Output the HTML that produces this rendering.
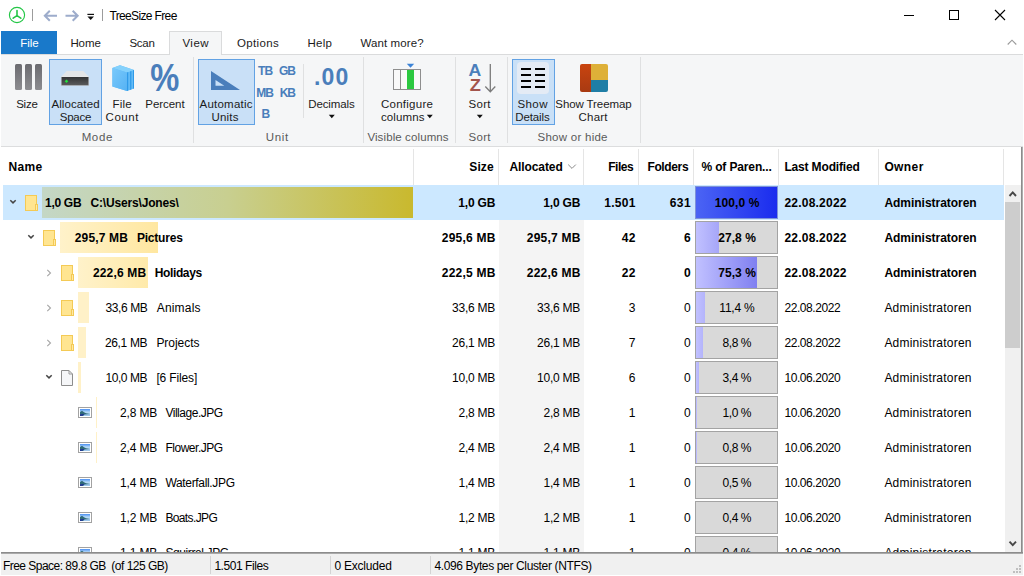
<!DOCTYPE html>
<html lang="en"><head><meta charset="utf-8"><title>TreeSize Free</title>
<style>
html,body{margin:0;padding:0;background:#fff;}
#win{position:relative;width:1024px;height:576px;overflow:hidden;background:#fff;font-family:"Liberation Sans", sans-serif;font-size:12px;color:#000;}
#win div,#win svg{position:absolute;box-sizing:border-box;}
.t{position:absolute;white-space:pre;line-height:16px;height:16px;}
.rb{color:#1b1b1b;}
.gl{color:#5a5a5a;}
.w{color:#fff;}
.bl{color:#4a7ebb;}

</style></head><body>
<div id="win">
<svg style="left:8px;top:6px" width="18" height="18" viewBox="0 0 18 18"><circle cx="9" cy="9" r="7.6" fill="#fff" stroke="#23c646" stroke-width="1.15"/><path d="M9 4.6 L9 9.6 M9 9.6 L5.2 12.2 M9 9.6 L12.8 12.2" stroke="#23c646" stroke-width="1.6" stroke-linecap="round" fill="none"/></svg>
<div style="left:32px;top:9px;width:1px;height:12px;background:#9c9c9c;"></div>
<svg style="left:43px;top:9px" width="16" height="14" viewBox="0 0 16 14"><path d="M14 6.8 H2.2 M6.8 1.8 L1.8 6.8 L6.8 11.8" stroke="#9daccb" stroke-width="2" fill="none"/></svg>
<svg style="left:64px;top:9px" width="16" height="14" viewBox="0 0 16 14"><path d="M1.5 6.8 H13.3 M8.7 1.8 L13.7 6.8 L8.7 11.8" stroke="#9daccb" stroke-width="2" fill="none"/></svg>
<svg style="left:86px;top:12px" width="10" height="10" viewBox="0 0 10 10"><rect x="1.4" y="1.8" width="6.6" height="1.2" fill="#111"/><path d="M1.4 4.6 H8 L4.7 8 Z" fill="#111"/></svg>
<div style="left:102px;top:9px;width:1px;height:12px;background:#9c9c9c;"></div>
<span class="t" style="top:8.24px;left:109.4px;letter-spacing:-0.638px;">TreeSize Free</span>
<div style="left:904px;top:15px;width:10px;height:1px;background:#000;"></div>
<div style="left:949px;top:10px;width:10px;height:10px;background:transparent;border:1px solid #000;"></div>
<svg style="left:994px;top:9px" width="12" height="12" viewBox="0 0 12 12"><path d="M1 1 L11 11 M11 1 L1 11" stroke="#000" stroke-width="1.1" fill="none"/></svg>
<svg style="left:1006px;top:38px" width="12" height="8" viewBox="0 0 12 8"><path d="M1.7 6.5 L6 2.2 L10.3 6.5" stroke="#9a9a9a" stroke-width="1.1" fill="none"/></svg>
<div style="left:1px;top:54px;width:1022px;height:1px;background:#dadbdc;"></div>
<div style="left:1px;top:55px;width:1022px;height:91px;background:#f5f6f7;"></div>
<div style="left:1px;top:146px;width:1022px;height:1px;background:#dcddde;"></div>
<div style="left:1px;top:31px;width:56px;height:23px;background:#1979ca;"></div>
<span class="t w" style="top:35.02px;left:20.32px;letter-spacing:-0.058px;font-size:11.5px;">File</span>
<span class="t rb" style="top:35.02px;left:70.4px;letter-spacing:-0.097px;font-size:11.5px;">Home</span>
<span class="t rb" style="top:35.02px;left:129.4px;letter-spacing:-0.230px;font-size:11.5px;">Scan</span>
<div style="left:169px;top:31px;width:53px;height:24px;background:#f5f6f7;border:1px solid #dadbdc;border-bottom:none;"></div>
<span class="t rb" style="top:35.02px;left:182.4px;letter-spacing:0.520px;font-size:11.5px;">View</span>
<span class="t rb" style="top:35.02px;left:236.9px;letter-spacing:0.380px;font-size:11.5px;">Options</span>
<span class="t rb" style="top:35.02px;left:307.4px;letter-spacing:0.311px;font-size:11.5px;">Help</span>
<span class="t rb" style="top:35.02px;left:360.4px;letter-spacing:0.108px;font-size:11.5px;">Want more?</span>
<div style="left:193px;top:57px;width:1px;height:86px;background:#dfe0e1;"></div>
<div style="left:363px;top:57px;width:1px;height:86px;background:#dfe0e1;"></div>
<div style="left:455px;top:57px;width:1px;height:86px;background:#dfe0e1;"></div>
<div style="left:507px;top:57px;width:1px;height:86px;background:#dfe0e1;"></div>
<div style="left:640px;top:57px;width:1px;height:86px;background:#dfe0e1;"></div>
<div style="left:303px;top:64px;width:1px;height:54px;background:#dfe0e1;"></div>
<div style="left:15px;top:64px;width:7px;height:26px;background:linear-gradient(#6b6b70,#8c8c90);border-radius:1.5px;"></div>
<div style="left:25px;top:64px;width:7px;height:26px;background:linear-gradient(#6b6b70,#8c8c90);border-radius:1.5px;"></div>
<div style="left:35px;top:64px;width:7px;height:26px;background:linear-gradient(#6b6b70,#8c8c90);border-radius:1.5px;"></div>
<span class="t rb" style="top:95.82px;left:16.22px;letter-spacing:-0.269px;font-size:11.5px;">Size</span>
<div style="left:49px;top:59px;width:53px;height:66px;background:#c9e0f7;border:1px solid #62a2e4;"></div>
<svg style="left:60px;top:70px" width="30" height="17" viewBox="0 0 30 17"><defs><linearGradient id="dv" x1="0" y1="0" x2="0" y2="1"><stop offset="0" stop-color="#333435"/><stop offset="1" stop-color="#5a5b5c"/></linearGradient></defs><path d="M6.7 1 H23.3 L28.8 6.8 H1.2 Z" fill="#e3e5e7"/><path d="M2 6 L1.2 6.9 H28.8 L28 6 Z" fill="#f7f8f9"/><rect x="1.2" y="6.8" width="27.6" height="8.9" fill="#a9a9a9"/><rect x="1.7" y="7" width="26.6" height="8.1" fill="url(#dv)"/><path d="M6.5 9.5 L8.3 11.3 L6.5 13.1 L4.7 11.3 Z" fill="#22e23c"/></svg>
<span class="t rb" style="top:95.82px;left:51.40px;letter-spacing:0.110px;font-size:11.5px;">Allocated</span>
<span class="t rb" style="top:108.92px;left:59.72px;letter-spacing:-0.262px;font-size:11.5px;">Space</span>
<svg style="left:111px;top:64px" width="24" height="28" viewBox="0 0 24 28"><defs><linearGradient id="fc" x1="0" y1="0" x2="1" y2="1"><stop offset="0" stop-color="#79c9fb"/><stop offset="1" stop-color="#55b2f4"/></linearGradient></defs><path d="M1.4 4.1 L9 1.3 L23 6 V24.5 L16.1 27 L1.4 22.6 Z" fill="#62bbf7"/><path d="M1.4 4.1 L9 1.3 L23 6 L16.1 8.5 Z" fill="#84d1fc"/><path d="M1.4 4.1 L16.1 8.5 V27 L1.4 22.6 Z" fill="url(#fc)"/><path d="M16.1 8.5 L17.2 8.1 V26.6 L16.1 27 Z M19.2 7.4 L20.3 7 V25.5 L19.2 25.9 Z M22.1 6.3 L23 6 V24.5 L22.1 24.8 Z" fill="#2a97e6"/></svg>
<span class="t rb" style="top:95.82px;left:112.45px;letter-spacing:0.192px;font-size:11.5px;">File</span>
<span class="t rb" style="top:108.92px;left:105.61px;letter-spacing:0.522px;font-size:11.5px;">Count</span>
<span class="t bl" style="top:58.33px;line-height:40px;height:40px;left:148.40px;font-size:38px;font-weight:700;transform:scaleX(.86);">%</span>
<span class="t rb" style="top:95.82px;left:145.33px;letter-spacing:-0.049px;font-size:11.5px;">Percent</span>
<div style="left:198px;top:59px;width:57px;height:66px;background:#c9e0f7;border:1px solid #62a2e4;"></div>
<svg style="left:210px;top:70px" width="31" height="21" viewBox="0 0 31 21"><path d="M1 1 L30 20 H1 Z M5.5 10 V15.8 H14.3 Z" fill="#4a7ebb" fill-rule="evenodd"/></svg>
<span class="t rb" style="top:95.82px;left:199.47px;letter-spacing:0.240px;font-size:11.5px;">Automatic</span>
<span class="t rb" style="top:108.92px;left:211.46px;letter-spacing:0.219px;font-size:11.5px;">Units</span>
<span class="t bl" style="top:62.54px;left:258px;letter-spacing:-0.850px;font-weight:700;">TB</span>
<span class="t bl" style="top:62.54px;left:279.1px;letter-spacing:-1.200px;font-weight:700;">GB</span>
<span class="t bl" style="top:84.54px;left:256.2px;letter-spacing:-0.886px;font-weight:700;">MB</span>
<span class="t bl" style="top:84.54px;left:279.7px;letter-spacing:-1.200px;font-weight:700;">KB</span>
<span class="t bl" style="top:106.44px;left:261.4px;font-weight:700;">B</span>
<span class="t bl" style="top:62.03px;line-height:30px;height:30px;left:314.01px;letter-spacing:1.200px;font-size:23px;font-weight:700;">.00</span>
<span class="t rb" style="top:95.82px;left:308.29px;letter-spacing:-0.125px;font-size:11.5px;">Decimals</span>
<svg style="left:328px;top:114px" width="8" height="5" viewBox="0 0 8 5"><path d="M0.8 0.8 H6.8 L3.8 4.2 Z" fill="#111"/></svg>
<div style="left:393px;top:69px;width:28px;height:21px;background:#f9f9f9;border:1px solid #8e8e8e;"></div>
<div style="left:400px;top:70px;width:1px;height:19px;background:#8e8e8e;"></div>
<div style="left:407px;top:70px;width:7px;height:19px;background:#2cc840;"></div>
<svg style="left:406px;top:63px" width="9" height="6" viewBox="0 0 9 6"><path d="M0.8 0.8 H8.2 L4.5 4.8 Z" fill="#3b82d6"/></svg>
<span class="t rb" style="top:95.82px;left:380.9px;letter-spacing:0.269px;font-size:11.5px;">Configure</span>
<span class="t rb" style="top:108.92px;left:380.9px;letter-spacing:0.139px;font-size:11.5px;">columns</span>
<svg style="left:426px;top:114px" width="8" height="5" viewBox="0 0 8 5"><path d="M0.8 0.8 H6.8 L3.8 4.2 Z" fill="#111"/></svg>
<span class="t bl" style="top:60.48px;line-height:20px;height:20px;left:469.24px;font-size:16.5px;font-weight:700;transform:scaleX(1.07);">A</span>
<span class="t" style="top:76.01px;line-height:20px;height:20px;left:470.40px;font-size:17px;font-weight:700;color:#a3544c;transform:scaleX(1.07);">Z</span>
<svg style="left:484px;top:63px" width="13" height="31" viewBox="0 0 13 31"><path d="M6.3 1 V28.5 M1.3 23.5 L6.3 28.7 L11.3 23.5" stroke="#7b7b7b" stroke-width="1.3" fill="none"/></svg>
<span class="t rb" style="top:95.82px;left:468.50px;letter-spacing:0.302px;font-size:11.5px;">Sort</span>
<svg style="left:476px;top:114px" width="8" height="5" viewBox="0 0 8 5"><path d="M0.8 0.8 H6.8 L3.8 4.2 Z" fill="#111"/></svg>
<div style="left:512px;top:59px;width:43px;height:66px;background:#c9e0f7;border:1px solid #62a2e4;"></div>
<div style="left:517px;top:62px;width:32px;height:32px;background:#e4ebf5;border-radius:4px;"></div>
<div style="left:521px;top:68px;width:10px;height:2px;background:#000;"></div>
<div style="left:535px;top:68px;width:10px;height:2px;background:#000;"></div>
<div style="left:521px;top:74px;width:10px;height:2px;background:#000;"></div>
<div style="left:535px;top:74px;width:10px;height:2px;background:#000;"></div>
<div style="left:521px;top:80px;width:10px;height:2px;background:#000;"></div>
<div style="left:535px;top:80px;width:10px;height:2px;background:#000;"></div>
<div style="left:521px;top:86px;width:10px;height:2px;background:#000;"></div>
<div style="left:535px;top:86px;width:10px;height:2px;background:#000;"></div>
<span class="t rb" style="top:95.82px;left:517.54px;letter-spacing:0.380px;font-size:11.5px;">Show</span>
<span class="t rb" style="top:108.92px;left:515.29px;letter-spacing:-0.122px;font-size:11.5px;">Details</span>
<svg style="left:580px;top:64px" width="28" height="28" viewBox="0 0 28 28"><defs><clipPath id="tm"><rect x="0" y="0" width="28" height="28" rx="2"/></clipPath><linearGradient id="tmo" x1="0" y1="0" x2="0" y2="1"><stop offset="0" stop-color="#c9440f"/><stop offset="1" stop-color="#a83a12"/></linearGradient></defs><g clip-path="url(#tm)"><rect x="0" y="0" width="11" height="28" fill="url(#tmo)"/><rect x="11" y="0" width="17" height="16" fill="#deb038"/><rect x="11" y="16" width="17" height="12" fill="#1f7ea6"/></g></svg>
<span class="t rb" style="top:95.82px;left:555.31px;letter-spacing:-0.088px;font-size:11.5px;">Show Treemap</span>
<span class="t rb" style="top:108.92px;left:578.47px;letter-spacing:0.235px;font-size:11.5px;">Chart</span>
<span class="t gl" style="top:128.72px;left:81.66px;letter-spacing:0.630px;font-size:11.5px;">Mode</span>
<span class="t gl" style="top:128.72px;left:265.71px;letter-spacing:0.712px;font-size:11.5px;">Unit</span>
<span class="t gl" style="top:128.72px;left:367.40px;letter-spacing:0.107px;font-size:11.5px;">Visible columns</span>
<span class="t gl" style="top:128.72px;left:468.50px;letter-spacing:0.302px;font-size:11.5px;">Sort</span>
<span class="t gl" style="top:128.72px;left:537.48px;letter-spacing:0.265px;font-size:11.5px;">Show or hide</span>
<div style="left:413px;top:149px;width:1px;height:36px;background:#e5e5e5;"></div>
<div style="left:498px;top:149px;width:1px;height:36px;background:#e5e5e5;"></div>
<div style="left:583px;top:149px;width:1px;height:36px;background:#e5e5e5;"></div>
<div style="left:638px;top:149px;width:1px;height:36px;background:#e5e5e5;"></div>
<div style="left:693px;top:149px;width:1px;height:36px;background:#e5e5e5;"></div>
<div style="left:778px;top:149px;width:1px;height:36px;background:#e5e5e5;"></div>
<div style="left:878px;top:149px;width:1px;height:36px;background:#e5e5e5;"></div>
<div style="left:1003px;top:149px;width:1px;height:36px;background:#e5e5e5;"></div>
<span class="t" style="top:158.64px;left:8.4px;letter-spacing:0.403px;font-weight:700;">Name</span>
<span class="t" style="top:158.64px;left:469.37px;letter-spacing:0.071px;font-weight:700;">Size</span>
<span class="t" style="top:158.64px;left:509.4px;letter-spacing:-0.080px;font-weight:700;">Allocated</span>
<svg style="left:567px;top:163px" width="10" height="7" viewBox="0 0 10 7"><path d="M1.2 1.6 L5 5.4 L8.8 1.6" stroke="#8a8a8a" stroke-width="1" fill="none"/></svg>
<span class="t" style="top:158.64px;left:608.29px;letter-spacing:-0.512px;font-weight:700;">Files</span>
<span class="t" style="top:158.64px;left:647.44px;letter-spacing:-0.363px;font-weight:700;">Folders</span>
<span class="t" style="top:158.64px;left:701.4px;letter-spacing:-0.133px;font-weight:700;">% of Paren...</span>
<span class="t" style="top:158.64px;left:784.4px;letter-spacing:-0.157px;font-weight:700;">Last Modified</span>
<span class="t" style="top:158.64px;left:884.4px;letter-spacing:0.391px;font-weight:700;">Owner</span>
<div style="left:499px;top:220px;width:85px;height:333px;background:#f4f4f4;"></div>
<div style="left:3px;top:185px;width:1001px;height:35px;background:#cce8ff;"></div>
<div style="left:42px;top:187px;width:371px;height:31px;background:linear-gradient(90deg,#c4d7c6,#c8cf90 50%,#c9b92e);"></div>
<svg style="left:9px;top:199px" width="8" height="6" viewBox="0 0 8 6"><path d="M1.3 1.3 L4 3.9 L6.7 1.3" stroke="#454545" stroke-width="1.5" fill="none"/></svg>
<svg style="left:25px;top:195px" width="14" height="17" viewBox="0 0 14 17"><rect x="0.5" y="0.5" width="11" height="15" fill="#ffe591" stroke="#f4ca55"/><rect x="10.5" y="9.5" width="2" height="6" fill="#ffe9a4" stroke="#f4ca55"/></svg>
<span class="t" style="top:194.84px;left:45.01px;letter-spacing:-0.286px;font-weight:700;">1,0 GB</span>
<span class="t" style="top:194.84px;left:90.4px;letter-spacing:-0.160px;font-weight:700;">C:\Users\Jones\</span>
<span class="t num" style="top:194.84px;left:458.30px;letter-spacing:-0.203px;font-weight:700;">1,0 GB</span>
<span class="t num" style="top:194.84px;left:543.30px;letter-spacing:-0.203px;font-weight:700;">1,0 GB</span>
<span class="t num" style="top:194.84px;left:604.20px;letter-spacing:0.292px;font-weight:700;">1.501</span>
<span class="t num" style="top:194.84px;left:669.74px;letter-spacing:0.413px;font-weight:700;">631</span>
<div style="left:695px;top:186px;width:83px;height:33px;background:linear-gradient(90deg,#4b64f4,#1a2cee);border:1px solid #7f93d8;"></div>
<span class="t num" style="top:194.84px;left:714.66px;letter-spacing:0.105px;font-weight:700;">100,0 %</span>
<span class="t" style="top:194.84px;left:784.4px;letter-spacing:0.224px;font-weight:700;">22.08.2022</span>
<span class="t" style="top:194.84px;left:884.4px;letter-spacing:-0.026px;font-weight:700;">Administratoren</span>
<div style="left:60px;top:222px;width:98px;height:31px;background:linear-gradient(90deg,#fff2ca,#ffe7a0);"></div>
<svg style="left:27px;top:234px" width="8" height="6" viewBox="0 0 8 6"><path d="M1.3 1.3 L4 3.9 L6.7 1.3" stroke="#454545" stroke-width="1.5" fill="none"/></svg>
<svg style="left:43px;top:230px" width="14" height="17" viewBox="0 0 14 17"><rect x="0.5" y="0.5" width="11" height="15" fill="#ffe591" stroke="#f4ca55"/><rect x="10.5" y="9.5" width="2" height="6" fill="#ffe9a4" stroke="#f4ca55"/></svg>
<span class="t" style="top:229.84px;left:74.75px;letter-spacing:0.146px;font-weight:700;">295,7 MB</span>
<span class="t" style="top:229.84px;left:136.9px;letter-spacing:-0.195px;font-weight:700;">Pictures</span>
<span class="t num" style="top:229.84px;left:441.83px;letter-spacing:0.206px;font-weight:700;">295,6 MB</span>
<span class="t num" style="top:229.84px;left:526.83px;letter-spacing:0.206px;font-weight:700;">295,7 MB</span>
<span class="t num" style="top:229.84px;left:621.63px;letter-spacing:0.410px;font-weight:700;">42</span>
<span class="t num" style="top:229.84px;left:683.91px;font-weight:700;">6</span>
<div style="left:695px;top:221px;width:83px;height:33px;background:#d9d9d9;border:1px solid #a3a3a3;"></div>
<div style="left:696px;top:222px;width:22.5px;height:31px;background:linear-gradient(90deg,#c1c1ff,#a6a6f8);"></div>
<span class="t num" style="top:229.84px;left:718.18px;letter-spacing:0.055px;font-weight:700;">27,8 %</span>
<span class="t" style="top:229.84px;left:784.4px;letter-spacing:0.224px;font-weight:700;">22.08.2022</span>
<span class="t" style="top:229.84px;left:884.4px;letter-spacing:-0.026px;font-weight:700;">Administratoren</span>
<div style="left:78px;top:257px;width:70px;height:31px;background:linear-gradient(90deg,#fff2ca,#ffeaaa);"></div>
<svg style="left:46px;top:269px" width="6" height="8" viewBox="0 0 6 8"><path d="M1.3 0.8 L4.5 4 L1.3 7.2" stroke="#a6a6a6" stroke-width="1.1" fill="none"/></svg>
<svg style="left:61px;top:265px" width="14" height="17" viewBox="0 0 14 17"><rect x="0.5" y="0.5" width="11" height="15" fill="#ffe591" stroke="#f4ca55"/><rect x="10.5" y="9.5" width="2" height="6" fill="#ffe9a4" stroke="#f4ca55"/></svg>
<span class="t" style="top:264.84px;left:92.96px;letter-spacing:0.159px;font-weight:700;">222,6 MB</span>
<span class="t" style="top:264.84px;left:154.8px;letter-spacing:-0.389px;font-weight:700;">Holidays</span>
<span class="t num" style="top:264.84px;left:441.83px;letter-spacing:0.206px;font-weight:700;">222,5 MB</span>
<span class="t num" style="top:264.84px;left:526.83px;letter-spacing:0.206px;font-weight:700;">222,6 MB</span>
<span class="t num" style="top:264.84px;left:621.63px;letter-spacing:0.410px;font-weight:700;">22</span>
<span class="t num" style="top:264.84px;left:683.91px;font-weight:700;">0</span>
<div style="left:695px;top:256px;width:83px;height:33px;background:#d9d9d9;border:1px solid #a3a3a3;"></div>
<div style="left:696px;top:257px;width:61.0px;height:31px;background:linear-gradient(90deg,#c1c1ff,#8080f1);"></div>
<span class="t num" style="top:264.84px;left:718.18px;letter-spacing:0.055px;font-weight:700;">75,3 %</span>
<span class="t" style="top:264.84px;left:784.4px;letter-spacing:0.224px;font-weight:700;">22.08.2022</span>
<span class="t" style="top:264.84px;left:884.4px;letter-spacing:-0.026px;font-weight:700;">Administratoren</span>
<div style="left:78px;top:292px;width:11px;height:31px;background:#fff1c8;"></div>
<svg style="left:46px;top:304px" width="6" height="8" viewBox="0 0 6 8"><path d="M1.3 0.8 L4.5 4 L1.3 7.2" stroke="#a6a6a6" stroke-width="1.1" fill="none"/></svg>
<svg style="left:61px;top:300px" width="14" height="17" viewBox="0 0 14 17"><rect x="0.5" y="0.5" width="11" height="15" fill="#ffe591" stroke="#f4ca55"/><rect x="10.5" y="9.5" width="2" height="6" fill="#ffe9a4" stroke="#f4ca55"/></svg>
<span class="t" style="top:299.84px;left:105.51px;letter-spacing:-0.386px;">33,6 MB</span>
<span class="t" style="top:299.84px;left:156.7px;letter-spacing:0.187px;">Animals</span>
<span class="t num" style="top:299.84px;left:452.09px;letter-spacing:-0.249px;">33,6 MB</span>
<span class="t num" style="top:299.84px;left:537.09px;letter-spacing:-0.249px;">33,6 MB</span>
<span class="t num" style="top:299.84px;left:628.71px;">3</span>
<span class="t num" style="top:299.84px;left:683.91px;">0</span>
<div style="left:695px;top:291px;width:83px;height:33px;background:#d9d9d9;border:1px solid #a3a3a3;"></div>
<div style="left:696px;top:292px;width:9.2px;height:31px;background:linear-gradient(90deg,#c1c1ff,#b4b4fb);"></div>
<span class="t num" style="top:299.84px;left:719.33px;letter-spacing:-0.225px;">11,4 %</span>
<span class="t" style="top:299.84px;left:784.4px;letter-spacing:-0.426px;">22.08.2022</span>
<span class="t" style="top:299.84px;left:884.4px;letter-spacing:0.217px;">Administratoren</span>
<div style="left:78px;top:327px;width:8px;height:31px;background:#fff1c8;"></div>
<svg style="left:46px;top:339px" width="6" height="8" viewBox="0 0 6 8"><path d="M1.3 0.8 L4.5 4 L1.3 7.2" stroke="#a6a6a6" stroke-width="1.1" fill="none"/></svg>
<svg style="left:61px;top:335px" width="14" height="17" viewBox="0 0 14 17"><rect x="0.5" y="0.5" width="11" height="15" fill="#ffe591" stroke="#f4ca55"/><rect x="10.5" y="9.5" width="2" height="6" fill="#ffe9a4" stroke="#f4ca55"/></svg>
<span class="t" style="top:334.84px;left:104.96px;letter-spacing:-0.343px;">26,1 MB</span>
<span class="t" style="top:334.84px;left:156.4px;letter-spacing:-0.045px;">Projects</span>
<span class="t num" style="top:334.84px;left:452.09px;letter-spacing:-0.249px;">26,1 MB</span>
<span class="t num" style="top:334.84px;left:537.09px;letter-spacing:-0.249px;">26,1 MB</span>
<span class="t num" style="top:334.84px;left:628.71px;">7</span>
<span class="t num" style="top:334.84px;left:683.91px;">0</span>
<div style="left:695px;top:326px;width:83px;height:33px;background:#d9d9d9;border:1px solid #a3a3a3;"></div>
<div style="left:696px;top:327px;width:7.1px;height:31px;background:linear-gradient(90deg,#c1c1ff,#b4b4fb);"></div>
<span class="t num" style="top:334.84px;left:722.47px;letter-spacing:-0.408px;">8,8 %</span>
<span class="t" style="top:334.84px;left:784.4px;letter-spacing:-0.426px;">22.08.2022</span>
<span class="t" style="top:334.84px;left:884.4px;letter-spacing:0.217px;">Administratoren</span>
<div style="left:78px;top:362px;width:3px;height:31px;background:#fff1c8;"></div>
<svg style="left:45px;top:374px" width="8" height="6" viewBox="0 0 8 6"><path d="M1.3 1.3 L4 3.9 L6.7 1.3" stroke="#454545" stroke-width="1.5" fill="none"/></svg>
<svg style="left:61px;top:370px" width="12" height="16" viewBox="0 0 12 16"><path d="M0.5 0.5 H8 L11.5 4 V15.5 H0.5 Z" fill="#f5f6f8" stroke="#8d8d8d"/><path d="M8 0.5 V4 H11.5" fill="none" stroke="#9a9a9a"/></svg>
<span class="t" style="top:369.84px;left:105.47px;letter-spacing:-0.429px;">10,0 MB</span>
<span class="t" style="top:369.84px;left:156.4px;letter-spacing:-0.146px;">[6 Files]</span>
<span class="t num" style="top:369.84px;left:452.09px;letter-spacing:-0.249px;">10,0 MB</span>
<span class="t num" style="top:369.84px;left:537.09px;letter-spacing:-0.249px;">10,0 MB</span>
<span class="t num" style="top:369.84px;left:628.71px;">6</span>
<span class="t num" style="top:369.84px;left:683.91px;">0</span>
<div style="left:695px;top:361px;width:83px;height:33px;background:#d9d9d9;border:1px solid #a3a3a3;"></div>
<div style="left:696px;top:362px;width:2.8px;height:31px;background:linear-gradient(90deg,#c1c1ff,#b4b4fb);"></div>
<span class="t num" style="top:369.84px;left:722.47px;letter-spacing:-0.408px;">3,4 %</span>
<span class="t" style="top:369.84px;left:784.4px;letter-spacing:-0.426px;">10.06.2020</span>
<span class="t" style="top:369.84px;left:884.4px;letter-spacing:0.217px;">Administratoren</span>
<div style="left:96px;top:397px;width:1px;height:31px;background:#fff1c8;"></div>
<svg style="left:78px;top:407px" width="14" height="11" viewBox="0 0 14 11"><defs><linearGradient id="im6" x1="0" y1="0" x2="0" y2="1"><stop offset="0" stop-color="#4a8ff2"/><stop offset="0.45" stop-color="#b9dcf8"/><stop offset="1" stop-color="#8fc0e8"/></linearGradient></defs><rect x="0.5" y="0.5" width="13" height="10" fill="#fff" stroke="#a2a2a2"/><rect x="2" y="2" width="10" height="7" fill="url(#im6)"/><path d="M2 5 L4 3.8 L6 5.2 L8 6.2 L12 7 V9 H2 Z" fill="#2f6a78"/><path d="M2 7.4 L5 7 L7 8 L2 9 Z" fill="#1f2f9a"/><path d="M6.5 7.6 L12 7 V9 H5 Z" fill="#9cc6ea"/></svg>
<span class="t" style="top:404.84px;left:120.11px;letter-spacing:-0.186px;">2,8 MB</span>
<span class="t" style="top:404.84px;left:165.4px;letter-spacing:-0.471px;">Village.JPG</span>
<span class="t num" style="top:404.84px;left:458.56px;letter-spacing:-0.254px;">2,8 MB</span>
<span class="t num" style="top:404.84px;left:543.56px;letter-spacing:-0.254px;">2,8 MB</span>
<span class="t num" style="top:404.84px;left:628.71px;">1</span>
<span class="t num" style="top:404.84px;left:683.91px;">0</span>
<div style="left:695px;top:396px;width:83px;height:33px;background:#d9d9d9;border:1px solid #a3a3a3;"></div>
<div style="left:696px;top:397px;width:0.8px;height:31px;background:linear-gradient(90deg,#c1c1ff,#b4b4fb);"></div>
<span class="t num" style="top:404.84px;left:722.47px;letter-spacing:-0.408px;">1,0 %</span>
<span class="t" style="top:404.84px;left:784.4px;letter-spacing:-0.426px;">10.06.2020</span>
<span class="t" style="top:404.84px;left:884.4px;letter-spacing:0.217px;">Administratoren</span>
<div style="left:96px;top:432px;width:1px;height:31px;background:#fff1c8;"></div>
<svg style="left:78px;top:442px" width="14" height="11" viewBox="0 0 14 11"><defs><linearGradient id="im7" x1="0" y1="0" x2="0" y2="1"><stop offset="0" stop-color="#4a8ff2"/><stop offset="0.45" stop-color="#b9dcf8"/><stop offset="1" stop-color="#8fc0e8"/></linearGradient></defs><rect x="0.5" y="0.5" width="13" height="10" fill="#fff" stroke="#a2a2a2"/><rect x="2" y="2" width="10" height="7" fill="url(#im7)"/><path d="M2 5 L4 3.8 L6 5.2 L8 6.2 L12 7 V9 H2 Z" fill="#2f6a78"/><path d="M2 7.4 L5 7 L7 8 L2 9 Z" fill="#1f2f9a"/><path d="M6.5 7.6 L12 7 V9 H5 Z" fill="#9cc6ea"/></svg>
<span class="t" style="top:439.84px;left:120.11px;letter-spacing:-0.186px;">2,4 MB</span>
<span class="t" style="top:439.84px;left:165.4px;letter-spacing:-0.472px;">Flower.JPG</span>
<span class="t num" style="top:439.84px;left:458.56px;letter-spacing:-0.254px;">2,4 MB</span>
<span class="t num" style="top:439.84px;left:543.56px;letter-spacing:-0.254px;">2,4 MB</span>
<span class="t num" style="top:439.84px;left:628.71px;">1</span>
<span class="t num" style="top:439.84px;left:683.91px;">0</span>
<div style="left:695px;top:431px;width:83px;height:33px;background:#d9d9d9;border:1px solid #a3a3a3;"></div>
<div style="left:696px;top:432px;width:0.6px;height:31px;background:linear-gradient(90deg,#c1c1ff,#b4b4fb);"></div>
<span class="t num" style="top:439.84px;left:722.47px;letter-spacing:-0.408px;">0,8 %</span>
<span class="t" style="top:439.84px;left:784.4px;letter-spacing:-0.426px;">10.06.2020</span>
<span class="t" style="top:439.84px;left:884.4px;letter-spacing:0.217px;">Administratoren</span>
<svg style="left:78px;top:477px" width="14" height="11" viewBox="0 0 14 11"><defs><linearGradient id="im8" x1="0" y1="0" x2="0" y2="1"><stop offset="0" stop-color="#4a8ff2"/><stop offset="0.45" stop-color="#b9dcf8"/><stop offset="1" stop-color="#8fc0e8"/></linearGradient></defs><rect x="0.5" y="0.5" width="13" height="10" fill="#fff" stroke="#a2a2a2"/><rect x="2" y="2" width="10" height="7" fill="url(#im8)"/><path d="M2 5 L4 3.8 L6 5.2 L8 6.2 L12 7 V9 H2 Z" fill="#2f6a78"/><path d="M2 7.4 L5 7 L7 8 L2 9 Z" fill="#1f2f9a"/><path d="M6.5 7.6 L12 7 V9 H5 Z" fill="#9cc6ea"/></svg>
<span class="t" style="top:474.84px;left:120.11px;letter-spacing:-0.186px;">1,4 MB</span>
<span class="t" style="top:474.84px;left:165.4px;letter-spacing:-0.329px;">Waterfall.JPG</span>
<span class="t num" style="top:474.84px;left:458.56px;letter-spacing:-0.254px;">1,4 MB</span>
<span class="t num" style="top:474.84px;left:543.56px;letter-spacing:-0.254px;">1,4 MB</span>
<span class="t num" style="top:474.84px;left:628.71px;">1</span>
<span class="t num" style="top:474.84px;left:683.91px;">0</span>
<div style="left:695px;top:466px;width:83px;height:33px;background:#d9d9d9;border:1px solid #a3a3a3;"></div>
<div style="left:696px;top:467px;width:0.4px;height:31px;background:linear-gradient(90deg,#c1c1ff,#b4b4fb);"></div>
<span class="t num" style="top:474.84px;left:722.47px;letter-spacing:-0.408px;">0,5 %</span>
<span class="t" style="top:474.84px;left:784.4px;letter-spacing:-0.426px;">10.06.2020</span>
<span class="t" style="top:474.84px;left:884.4px;letter-spacing:0.217px;">Administratoren</span>
<svg style="left:78px;top:512px" width="14" height="11" viewBox="0 0 14 11"><defs><linearGradient id="im9" x1="0" y1="0" x2="0" y2="1"><stop offset="0" stop-color="#4a8ff2"/><stop offset="0.45" stop-color="#b9dcf8"/><stop offset="1" stop-color="#8fc0e8"/></linearGradient></defs><rect x="0.5" y="0.5" width="13" height="10" fill="#fff" stroke="#a2a2a2"/><rect x="2" y="2" width="10" height="7" fill="url(#im9)"/><path d="M2 5 L4 3.8 L6 5.2 L8 6.2 L12 7 V9 H2 Z" fill="#2f6a78"/><path d="M2 7.4 L5 7 L7 8 L2 9 Z" fill="#1f2f9a"/><path d="M6.5 7.6 L12 7 V9 H5 Z" fill="#9cc6ea"/></svg>
<span class="t" style="top:509.84px;left:120.11px;letter-spacing:-0.186px;">1,2 MB</span>
<span class="t" style="top:509.84px;left:165.4px;letter-spacing:-0.629px;">Boats.JPG</span>
<span class="t num" style="top:509.84px;left:458.56px;letter-spacing:-0.254px;">1,2 MB</span>
<span class="t num" style="top:509.84px;left:543.56px;letter-spacing:-0.254px;">1,2 MB</span>
<span class="t num" style="top:509.84px;left:628.71px;">1</span>
<span class="t num" style="top:509.84px;left:683.91px;">0</span>
<div style="left:695px;top:501px;width:83px;height:33px;background:#d9d9d9;border:1px solid #a3a3a3;"></div>
<div style="left:696px;top:502px;width:0.3px;height:31px;background:linear-gradient(90deg,#c1c1ff,#b4b4fb);"></div>
<span class="t num" style="top:509.84px;left:722.47px;letter-spacing:-0.408px;">0,4 %</span>
<span class="t" style="top:509.84px;left:784.4px;letter-spacing:-0.426px;">10.06.2020</span>
<span class="t" style="top:509.84px;left:884.4px;letter-spacing:0.217px;">Administratoren</span>
<svg style="left:78px;top:547px" width="14" height="11" viewBox="0 0 14 11"><defs><linearGradient id="im10" x1="0" y1="0" x2="0" y2="1"><stop offset="0" stop-color="#4a8ff2"/><stop offset="0.45" stop-color="#b9dcf8"/><stop offset="1" stop-color="#8fc0e8"/></linearGradient></defs><rect x="0.5" y="0.5" width="13" height="10" fill="#fff" stroke="#a2a2a2"/><rect x="2" y="2" width="10" height="7" fill="url(#im10)"/><path d="M2 5 L4 3.8 L6 5.2 L8 6.2 L12 7 V9 H2 Z" fill="#2f6a78"/><path d="M2 7.4 L5 7 L7 8 L2 9 Z" fill="#1f2f9a"/><path d="M6.5 7.6 L12 7 V9 H5 Z" fill="#9cc6ea"/></svg>
<span class="t" style="top:544.84px;left:120.11px;letter-spacing:-0.186px;">1,1 MB</span>
<span class="t" style="top:544.84px;left:165.4px;letter-spacing:-0.394px;">Squirrel.JPG</span>
<span class="t num" style="top:544.84px;left:458.56px;letter-spacing:-0.254px;">1,1 MB</span>
<span class="t num" style="top:544.84px;left:543.56px;letter-spacing:-0.254px;">1,1 MB</span>
<span class="t num" style="top:544.84px;left:628.71px;">1</span>
<span class="t num" style="top:544.84px;left:683.91px;">0</span>
<div style="left:695px;top:536px;width:83px;height:33px;background:#d9d9d9;border:1px solid #a3a3a3;"></div>
<div style="left:696px;top:537px;width:0.3px;height:31px;background:linear-gradient(90deg,#c1c1ff,#b4b4fb);"></div>
<span class="t num" style="top:544.84px;left:722.47px;letter-spacing:-0.408px;">0,4 %</span>
<span class="t" style="top:544.84px;left:784.4px;letter-spacing:-0.426px;">10.06.2020</span>
<span class="t" style="top:544.84px;left:884.4px;letter-spacing:0.217px;">Administratoren</span>
<div style="left:1005px;top:185px;width:16px;height:367px;background:#f0f0f0;"></div>
<div style="left:1005px;top:202px;width:15px;height:146px;background:#cdcdcd;"></div>
<svg style="left:1008px;top:189px" width="10" height="9" viewBox="0 0 10 9"><path d="M1.5 7 L4.75 3.4 L8 7" stroke="#484848" stroke-width="1.9" fill="none"/></svg>
<svg style="left:1008px;top:539px" width="10" height="9" viewBox="0 0 10 9"><path d="M1.5 2.6 L4.75 6.2 L8 2.6" stroke="#484848" stroke-width="1.9" fill="none"/></svg>
<div style="left:1021px;top:147px;width:1px;height:406px;background:#8c8c8c;"></div>
<div style="left:1022px;top:147px;width:1px;height:406px;background:#adadad;"></div>
<div style="left:0px;top:552px;width:1024px;height:24px;background:#fff;"></div>
<div style="left:1px;top:554px;width:1022px;height:21px;background:#f0f0f0;"></div>
<div style="left:1px;top:552px;width:1022px;height:1px;background:#8c8c8c;"></div>
<div style="left:1px;top:553px;width:1022px;height:1px;background:#a9a9a9;"></div>
<div style="left:210px;top:556px;width:1px;height:18px;background:#d4d4d4;"></div>
<div style="left:330px;top:556px;width:1px;height:18px;background:#d4d4d4;"></div>
<div style="left:430px;top:556px;width:1px;height:18px;background:#d4d4d4;"></div>
<span class="t" style="top:558.04px;left:2.9px;letter-spacing:-0.520px;">Free Space: 89.8 GB  (of 125 GB)</span>
<span class="t" style="top:558.04px;left:214.4px;letter-spacing:-0.446px;">1.501 Files</span>
<span class="t" style="top:558.04px;left:334.4px;letter-spacing:-0.208px;">0 Excluded</span>
<span class="t" style="top:558.04px;left:434.4px;letter-spacing:-0.359px;">4.096 Bytes per Cluster (NTFS)</span>
<div style="left:1019px;top:571px;width:2px;height:2px;background:#bfbfbf;"></div>
<div style="left:1019px;top:568px;width:2px;height:2px;background:#bfbfbf;"></div>
<div style="left:1019px;top:565px;width:2px;height:2px;background:#bfbfbf;"></div>
<div style="left:1016px;top:571px;width:2px;height:2px;background:#bfbfbf;"></div>
<div style="left:1016px;top:568px;width:2px;height:2px;background:#bfbfbf;"></div>
<div style="left:1013px;top:571px;width:2px;height:2px;background:#bfbfbf;"></div>
</div>
</body></html>
